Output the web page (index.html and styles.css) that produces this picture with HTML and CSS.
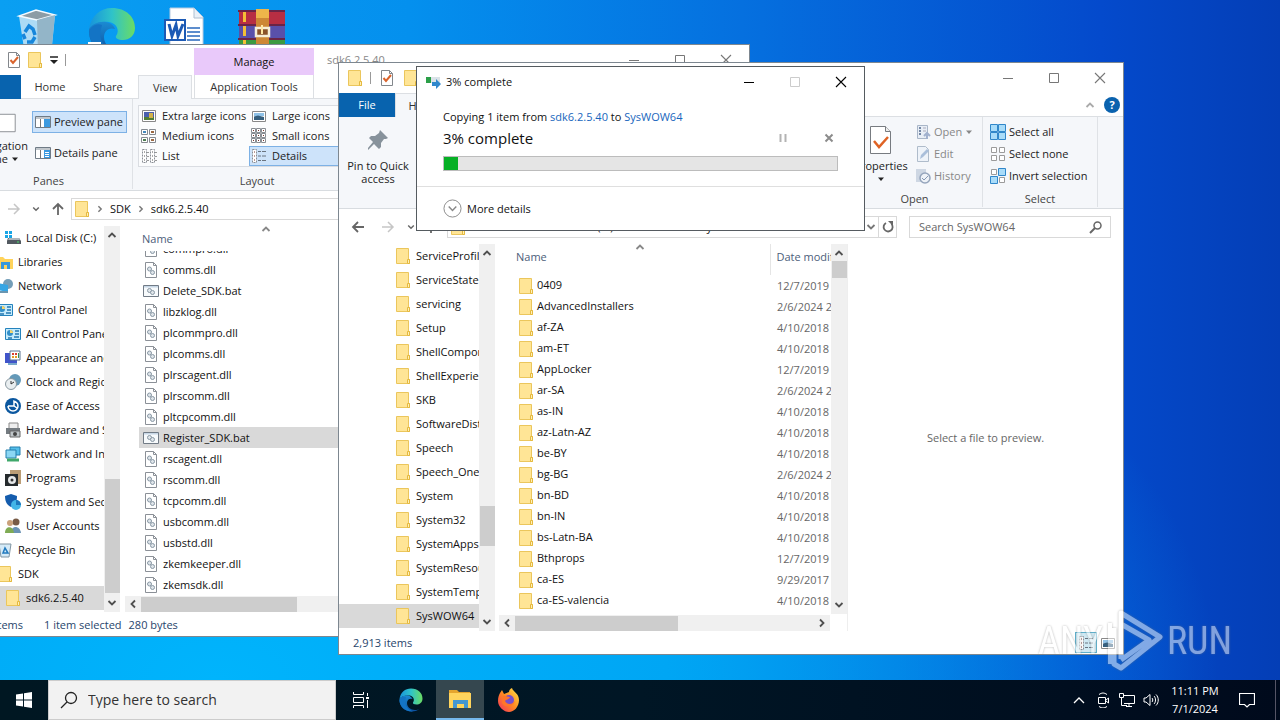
FILE: index.html
```html
<!DOCTYPE html>
<html lang="en">
<head>
<meta charset="utf-8">
<title>Desktop</title>
<link rel="stylesheet" href="styles.css">
</head>
<body>
<svg class="defs" aria-hidden="true">
  <symbol id="folder" viewBox="0 0 16 16"><path d="M1.500.5h12v11h1v4h-13z" fill="#ffe596" stroke="#ebc65c"/><path d="M12.500 11.500h2v4h-2z" fill="#fff0b8" stroke="#e5b93f"/></symbol>
  <symbol id="dll" viewBox="0 0 16 16"><path d="M2.500.5h8l3 3v12h-11z" fill="#fff" stroke="#8b9097"/><path d="M10.500.5v3h3" fill="none" stroke="#8b9097"/><circle cx="6.500" cy="7" r="2" fill="#dfe5ea" stroke="#8998a5"/><circle cx="9.500" cy="10.500" r="2" fill="#dfe5ea" stroke="#8998a5"/></symbol>
  <symbol id="bat" viewBox="0 0 16 16"><path d="M.5 2.500h15v11H.5z" fill="#f7fafc" stroke="#717b86"/><path d="M1 3h14v1.500H1z" fill="#c7d7e6"/><circle cx="6.500" cy="7.500" r="2" fill="#dfe5ea" stroke="#8998a5"/><circle cx="9.500" cy="9.500" r="2" fill="#dfe5ea" stroke="#8998a5"/></symbol>
  <symbol id="check" viewBox="0 0 16 16"><path d="M2.500.5h8l3 3v12h-11z" fill="#fff" stroke="#83878c"/><path d="M10.500.5v3h3" fill="none" stroke="#83878c"/><path d="M4.500 8l2.500 3 5-6" fill="none" stroke="#d9632c" stroke-width="2"/></symbol>
  <symbol id="min" viewBox="0 0 12 12"><path d="M1 6.500h10" stroke="currentColor"/></symbol>
  <symbol id="max" viewBox="0 0 12 12"><path d="M1.500 1.500h9v9h-9z" fill="none" stroke="currentColor"/></symbol>
  <symbol id="close" viewBox="0 0 12 12"><path d="M1 1l10 10M11 1L1 11" stroke="currentColor" stroke-width="1.100"/></symbol>
  <symbol id="up" viewBox="0 0 10 10"><path d="M1.500 7L5 3.500 8.500 7" fill="none" stroke="currentColor" stroke-width="1.800"/></symbol>
  <symbol id="down" viewBox="0 0 10 10"><path d="M1.500 3L5 6.500 8.500 3" fill="none" stroke="currentColor" stroke-width="1.800"/></symbol>
  <symbol id="left" viewBox="0 0 10 10"><path d="M7 1.500L3.500 5 7 8.500" fill="none" stroke="currentColor" stroke-width="1.800"/></symbol>
  <symbol id="right" viewBox="0 0 10 10"><path d="M3 1.500L6.500 5 3 8.500" fill="none" stroke="currentColor" stroke-width="1.800"/></symbol>
  <symbol id="back" viewBox="0 0 14 14"><path d="M13 7H2M7 2L2 7l5 5" fill="none" stroke="currentColor" stroke-width="1.800"/></symbol>
  <symbol id="fwd" viewBox="0 0 14 14"><path d="M1 7h11M7 2l5 5-5 5" fill="none" stroke="currentColor" stroke-width="1.500"/></symbol>
  <symbol id="upa" viewBox="0 0 14 14"><path d="M7 13V2M2 7l5-5 5 5" fill="none" stroke="currentColor" stroke-width="1.800"/></symbol>
  <symbol id="tri" viewBox="0 0 8 8"><path d="M1 2.500h6L4 6z" fill="currentColor"/></symbol>
  <symbol id="panel" viewBox="0 0 16 16"><path d="M.5 2.500h15v11H.5z" fill="#c5ebfc" stroke="#2583bd"/><circle cx="5" cy="7" r="3" fill="#338fc9"/><path d="M5 7V4a3 3 0 0 1 3 3z" fill="#f8d66b"/><path d="M10 5h4M10 8h4M3 12h4M9 11h5" stroke="#2478b0" stroke-width="1.500"/></symbol>
  <symbol id="details" viewBox="0 0 16 16"><path d="M1.500 1.500h4v13h-4z" fill="#fff" stroke="#8a8f96" stroke-dasharray="2 1"/><path d="M3 4h1M3 8h1M3 12h1" stroke="#7c3b32"/><path d="M7 3.500h3m1 0h4M7 8h3m1 0h4M7 12.500h3m1 0h4" stroke="#6a7480"/></symbol>
  <symbol id="list" viewBox="0 0 16 16"><path d="M1.500 1.500h4v13h-4zM9.500 1.500h4v13h-4z" fill="#fff" stroke="#8a8f96" stroke-dasharray="2 1"/><path d="M3 4h1M3 8h1M3 12h1M11 4h1M11 8h1M11 12h1" stroke="#555"/><path d="M6 4.500h2M6 8.500h2M6 12.500h2M14 4.500h2M14 8.500h2M14 12.500h2" stroke="#999"/></symbol>
  <symbol id="photo" viewBox="0 0 16 16"><path d="M1.500 3.500h13v10h-13z" fill="#fff" stroke="#888"/><path d="M3 5h10v3H3z" fill="#8fc2e8"/><path d="M3 8.500l4-1 6 1.500v3H3z" fill="#355f7e"/></symbol>
  <symbol id="xl" viewBox="0 0 16 16"><path d="M1.500 2.500h13v11h-13z" fill="#fff" stroke="#888"/><path d="M3 4h10v8H3z" fill="#4b5fae"/><path d="M3 9h10v3H3z" fill="#4f7d35"/><path d="M8 5h4v5H8z" fill="#d2b24a"/></symbol>
  <symbol id="medium" viewBox="0 0 16 16"><path d="M.5 1.500h6v5h-6zM8.500 1.500h6v5h-6zM.5 9.500h6v5h-6zM8.500 9.500h6v5h-6z" fill="#fff" stroke="#858a90"/><path d="M2 3h3v2H2z" fill="#4589bc"/><path d="M10 3h3v2h-3zM10 11h3v2h-3z" fill="#9c6943"/><path d="M2 11h3v2H2z" fill="#4b7c50"/></symbol>
  <symbol id="small" viewBox="0 0 16 16"><path d="M.5.5h4v4h-4zM5.500.5h4v4h-4zM10.500.5h4v4h-4zM.5 5.500h4v4h-4zM5.500 5.500h4v4h-4zM10.500 5.500h4v4h-4zM.5 10.500h4v4h-4zM5.500 10.500h4v4h-4zM10.500 10.500h4v4h-4z" fill="#fff" stroke="#888d93"/><path d="M2 2.500h1M7 2.500h1M12 2.500h1M2 7.500h1M7 7.500h1M12 7.500h1M2 12.500h1M7 12.500h1M12 12.500h1" stroke="#7c3b32"/></symbol>
  <symbol id="pane" viewBox="0 0 16 16"><path d="M.5 2.500h15v11H.5z" fill="#fff" stroke="#6f7b86"/><path d="M1 3h14v2H1z" fill="#c1c7cc"/><path d="M5.500 5v8" stroke="#777"/><path d="M9 5h6v8H9z" fill="#3c9ae0"/></symbol>
  <symbol id="pane2" viewBox="0 0 16 16"><path d="M.5 2.500h15v11H.5z" fill="#fff" stroke="#6f7b86"/><path d="M1 3h14v2H1z" fill="#c1c7cc"/><path d="M5.500 5v8" stroke="#777"/><path d="M9 5h6v8H9z" fill="#3c9ae0"/><path d="M10 7.500h4M10 9.500h4M10 11.500h4" stroke="#fff"/></symbol>
  <symbol id="edge" viewBox="0 0 48 48"><defs><linearGradient id="eg" x1="0" x2="1"><stop offset="0" stop-color="#1793dc"/><stop offset=".5" stop-color="#2fc3c9"/><stop offset="1" stop-color="#6bdc63"/></linearGradient><linearGradient id="ed" x1="0" y1="0" x2="0" y2="1"><stop offset="0" stop-color="#1b8bd3"/><stop offset="1" stop-color="#0c4f9e"/></linearGradient></defs><path d="M1 22C3 9 12 1 24 1c14 0 23 9 23 20 0 8-6 12-12 12-5 0-8-2-7-4 4-5 1-13-7-14C12 14 4 17 1 22z" fill="url(#eg)"/><path d="M1 22c3-5 10-8 17-7 5 1 8 4 9 7-5-2-11 1-11 8 0 8 7 14 16 14 4 0 7-1 10-3-4 4-10 6-17 6C11 47 0 37 1 22z" fill="url(#ed)"/><path d="M13 22c-3 10 3 20 15 25C15 48 1 39 1 24c3-6 8-8 13-6z" fill="#1374c5"/></symbol>
</svg>

<main class="desktop">
  <div class="shortcuts">
    <svg viewBox="0 0 48 48"><path d="M6 9l17-6 19 5-4 40H12z" fill="#c9e5f6" opacity=".85"/><path d="M6 9l18 4 18-5-19-5z" fill="#8c9ca5" stroke="#f5fbff" stroke-width="1.500"/><path d="M24 13l18-5-4 40H25z" fill="#93b5c8"/><path d="M12 25l4-6 4 3 2 6M22 30l-3 5h-5M12 32l-2-5" fill="none" stroke="#1686db" stroke-width="3.500"/></svg>
    <svg viewBox="0 0 48 48"><use href="#edge"/><path d="M0 35h13v13H0z" fill="#fff"/></svg>
    <svg viewBox="0 0 48 48"><path d="M7 1h24l9 9v38H7z" fill="#fff" stroke="#b8cadf"/><path d="M31 1v10h9" fill="#e9f0f8" stroke="#aebfd0"/><path d="M24 21h13M24 25h13M24 29h13M24 33h13" stroke="#2868bd" stroke-width="1.500"/><path d="M2 13h20v20H2z" fill="#fff" stroke="#1c5ab5" stroke-width="2"/><path d="M6 17l3 12 4-11 2 11 5-12" fill="none" stroke="#1c5ab5" stroke-width="3"/></svg>
    <svg viewBox="0 0 48 48"><path d="M1 3h46v14H1z" fill="#b72e43"/><path d="M1 17h46v14H1z" fill="#5950aa"/><path d="M1 31h46v17H1z" fill="#3c9a41"/><path d="M0 4h47M0 18h47M0 32h47" stroke="#6a2446" stroke-width="2"/><path d="M5 5h3v10H5zM5 19h3v10H5zM5 33h3v12H5z" fill="#f4bf36"/><path d="M18 2h13v46H18z" fill="#cd8735"/><path d="M18 2h13v9H18z" fill="#edb54a"/><path d="M18 21h13v8H18z" fill="#8a5228" stroke="#f6eed8" stroke-width="2.500"/><path d="M24 18v9" stroke="#ffe7a3" stroke-width="2"/></svg>
  </div>

  <section class="window win-sdk" aria-label="sdk6.2.5.40">
    <header class="titlebar">
      <div class="quick"><svg class="i16"><use href="#check"/></svg><svg class="i16"><use href="#folder"/></svg><svg class="i12 dark" viewBox="0 0 12 12"><path d="M2 3h8" stroke="currentColor" stroke-width="1.500"/><path d="M2 6h8l-4 4z" fill="currentColor"/></svg><i class="bar"></i></div>
      <div class="manage">Manage</div>
      <div class="wtitle">sdk6.2.5.40</div>
      <div class="controls"><button aria-label="Minimize"><svg class="i12"><use href="#min"/></svg></button><button aria-label="Maximize"><svg class="i12"><use href="#max"/></svg></button><button aria-label="Close"><svg class="i12"><use href="#close"/></svg></button></div>
    </header>
    <nav class="tabs"><button class="file">File</button><button>Home</button><button>Share</button><button class="current">View</button><button class="tools">Application Tools</button></nav>
    <div class="ribbon">
      <div class="group panes">
        <div class="group-body">
          <button class="big"><svg class="navicon" viewBox="0 0 32 24"><path d="M.5 2.500h31v19H.5z" fill="#fff" stroke="#85898e"/><path d="M1 3h10v18H1z" fill="#67b2e8"/></svg><span>Navigation<br>pane <svg class="i8"><use href="#tri"/></svg></span></button>
          <div class="stack"><button class="cmd on"><svg class="i16"><use href="#pane"/></svg>Preview pane</button><button class="cmd"><svg class="i16"><use href="#pane2"/></svg>Details pane</button></div>
        </div>
        <div class="caption">Panes</div>
      </div>
      <div class="group layout">
        <div class="gallery">
          <button><svg class="i16"><use href="#xl"/></svg>Extra large icons</button><button><svg class="i16"><use href="#photo"/></svg>Large icons</button>
          <button><svg class="i16"><use href="#medium"/></svg>Medium icons</button><button><svg class="i16"><use href="#small"/></svg>Small icons</button>
          <button><svg class="i16"><use href="#list"/></svg>List</button><button class="on"><svg class="i16"><use href="#details"/></svg>Details</button>
        </div>
        <div class="caption">Layout</div>
      </div>
    </div>
    <div class="address">
      <button class="faint" aria-label="Forward"><svg class="i14"><use href="#fwd"/></svg></button><button aria-label="Recent"><svg class="i8"><use href="#down"/></svg></button><button aria-label="Up"><svg class="i14"><use href="#upa"/></svg></button>
      <div class="path"><svg class="i16"><use href="#folder"/></svg><svg class="i8"><use href="#right"/></svg><span>SDK</span><svg class="i8"><use href="#right"/></svg><span>sdk6.2.5.40</span></div>
    </div>
    <div class="body">
      <ul class="tree">
        <li class="sub"><svg class="i16" viewBox="0 0 16 16"><path d="M0 1h3v3H0zM4 1h3v3H4zM0 5h3v3H0zM4 5h3v3H4z" fill="#19a5e5"/><path d="M3 8h11l2 3v3H2v-3z" fill="#525960"/><path d="M4 8h10l1 2H3z" fill="#aeb5ba"/><path d="M12 12h2" stroke="#4be06a"/></svg>Local Disk (C:)</li>
        <li><svg class="i16" viewBox="0 0 16 16"><path d="M0 3h6l2 2h8v10H0z" fill="#ffd35b"/><path d="M4 8h9v7h-3v-4H7v4H4z" fill="#3698dc"/></svg>Libraries</li>
        <li><svg class="i16" viewBox="0 0 16 16"><circle cx="11" cy="6" r="5" fill="#749eb8"/><path d="M1 5l10 2v7L1 12z" fill="#35a5e4"/><path d="M3 14h8" stroke="#6996b1" stroke-width="2"/></svg>Network</li>
        <li><svg class="i16"><use href="#panel"/></svg>Control Panel</li>
        <li class="sub"><svg class="i16"><use href="#panel"/></svg>All Control Panel Items</li>
        <li class="sub"><svg class="i16" viewBox="0 0 16 16"><path d="M0 3h12v10H0z" fill="#4054ca"/><path d="M5 1h10v9H5z" fill="#fff" stroke="#5d7491"/><path d="M7 3h2v2H7zM10 3h2v2h-2z" fill="#d8402d"/><path d="M7 6h2v2H7zM10 6h2v2h-2z" fill="#e79b21"/><path d="M13 3h1v5h-1z" fill="#368d53"/><path d="M3 14h9" stroke="#77a8cb" stroke-width="2"/></svg>Appearance and Personalization</li>
        <li class="sub"><svg class="i16" viewBox="0 0 16 16"><circle cx="10" cy="6" r="6" fill="#6499b8"/><circle cx="6" cy="10" r="5.500" fill="#e9eef0" stroke="#89979f"/><path d="M6 7v3l3-2" fill="none" stroke="#333"/></svg>Clock and Region</li>
        <li class="sub"><svg class="i16" viewBox="0 0 16 16"><circle cx="8" cy="8" r="8" fill="#0b579f"/><path d="M8 3a5 5 0 1 1-5 5M3 8h6V3m0 5l3 2" fill="none" stroke="#fff" stroke-width="1.500"/></svg>Ease of Access</li>
        <li class="sub"><svg class="i16" viewBox="0 0 16 16"><path d="M4 1h9v6H4z" fill="#eee" stroke="#888"/><path d="M1 6h14v6H1z" fill="#747b80"/><path d="M5 9h10v6H5z" fill="#bfc5c8" stroke="#666"/><circle cx="10" cy="12" r="2" fill="#444"/></svg>Hardware and Sound</li>
        <li class="sub"><svg class="i16" viewBox="0 0 16 16"><path d="M5 1h10v8H5z" fill="#55bee9" stroke="#247ead"/><path d="M1 4h10v8H1z" fill="#8bd7f4" stroke="#247ead"/><path d="M2 14h12" stroke="#40a86b" stroke-width="3"/></svg>Network and Internet</li>
        <li class="sub"><svg class="i16" viewBox="0 0 16 16"><path d="M5 0h11v14H5z" fill="#bb9d75"/><path d="M0 4h13v12H0z" fill="#262b2d"/><circle cx="7" cy="10" r="4" fill="#e6e8e9"/><circle cx="7" cy="10" r="1.500" fill="#333"/></svg>Programs</li>
        <li class="sub"><svg class="i16" viewBox="0 0 16 16"><path d="M0 2l6-2 6 2c0 6-2 9-6 11C2 11 0 8 0 2z" fill="#145cad"/><circle cx="11" cy="11" r="5" fill="#43b5e7"/><path d="M11 11V6a5 5 0 0 1 5 5z" fill="#1e78bd"/></svg>System and Security</li>
        <li class="sub"><svg class="i16" viewBox="0 0 16 16"><circle cx="11" cy="4" r="3.500" fill="#785b46"/><path d="M6 15c0-8 9-8 10 0z" fill="#6b93b4"/><circle cx="5" cy="5" r="3" fill="#caa17b"/><path d="M0 15c0-7 8-8 9 0z" fill="#7fab54"/></svg>User Accounts</li>
        <li><svg class="i16" viewBox="0 0 16 16"><path d="M2 2h12l-2 13H4z" fill="#d5eaf7" stroke="#8195a2"/><path d="M6 11l2-5 3 5z" fill="none" stroke="#2179be" stroke-width="1.500"/></svg>Recycle Bin</li>
        <li><svg class="i16"><use href="#folder"/></svg>SDK</li>
        <li class="sub chosen"><svg class="i16"><use href="#folder"/></svg>sdk6.2.5.40</li>
      </ul>
      <div class="vscroll"><svg class="i10"><use href="#up"/></svg><i></i><svg class="i10"><use href="#down"/></svg></div>
      <div class="files">
        <div class="colhead"><span>Name</span><svg class="i10 sort"><use href="#up"/></svg></div>
        <ul class="rows">
          <li><svg class="i16"><use href="#dll"/></svg>commpro.dll</li><li><svg class="i16"><use href="#dll"/></svg>comms.dll</li><li><svg class="i16"><use href="#bat"/></svg>Delete_SDK.bat</li><li><svg class="i16"><use href="#dll"/></svg>libzklog.dll</li><li><svg class="i16"><use href="#dll"/></svg>plcommpro.dll</li><li><svg class="i16"><use href="#dll"/></svg>plcomms.dll</li><li><svg class="i16"><use href="#dll"/></svg>plrscagent.dll</li><li><svg class="i16"><use href="#dll"/></svg>plrscomm.dll</li><li><svg class="i16"><use href="#dll"/></svg>pltcpcomm.dll</li><li class="chosen"><svg class="i16"><use href="#bat"/></svg>Register_SDK.bat</li><li><svg class="i16"><use href="#dll"/></svg>rscagent.dll</li><li><svg class="i16"><use href="#dll"/></svg>rscomm.dll</li><li><svg class="i16"><use href="#dll"/></svg>tcpcomm.dll</li><li><svg class="i16"><use href="#dll"/></svg>usbcomm.dll</li><li><svg class="i16"><use href="#dll"/></svg>usbstd.dll</li><li><svg class="i16"><use href="#dll"/></svg>zkemkeeper.dll</li><li><svg class="i16"><use href="#dll"/></svg>zkemsdk.dll</li>
        </ul>
        <div class="hscroll"><svg class="i10"><use href="#left"/></svg><i></i></div>
      </div>
    </div>
    <footer class="status"><span class="count">22 items</span><span>1 item selected</span><span>280 bytes</span></footer>
  </section>

  <section class="window win-sys" aria-label="SysWOW64">
    <header class="titlebar">
      <div class="quick"><svg class="i16"><use href="#folder"/></svg><i class="bar"></i><svg class="i16"><use href="#check"/></svg><svg class="i16"><use href="#folder"/></svg></div>
      <div class="controls"><button aria-label="Minimize"><svg class="i12"><use href="#min"/></svg></button><button aria-label="Maximize"><svg class="i12"><use href="#max"/></svg></button><button aria-label="Close"><svg class="i12"><use href="#close"/></svg></button></div>
    </header>
    <nav class="tabs"><button class="file">File</button><button class="current">Home</button><div class="help"><svg class="i10"><use href="#up"/></svg><button class="ask" aria-label="Help">?</button></div></nav>
    <div class="ribbon">
      <div class="group pin"><button class="big"><svg class="pinicon" viewBox="0 0 24 24"><path d="M14 2l8 8-2 1-2 0-3 4 0 4-2 2-5-5-6 6 0-2 5-6-4-4 2-2 4 0 4-3z" fill="#87929b"/></svg><span>Pin to Quick<br>access</span></button></div>
      <div class="group open">
        <div class="group-body">
          <button class="big"><svg class="propicon" viewBox="0 0 24 30"><path d="M1.500 1.500h15l5 5v22h-20z" fill="#fff" stroke="#777b80"/><path d="M16.500 1.500v5h5" fill="#eee" stroke="#777b80"/><path d="M5 16l5 6 9-10" fill="none" stroke="#df6325" stroke-width="2.500"/></svg><span>Properties<br><svg class="i8"><use href="#tri"/></svg></span></button>
          <div class="stack off"><button class="cmd"><svg class="i16" viewBox="0 0 16 16"><path d="M2.500 1.500h10v13h-10z" fill="#e8eef6" stroke="#a9b6c8"/><path d="M4 4h2M4 7h2M4 10h2" stroke="#7387a5" stroke-width="2"/><path d="M8 4h3M8 7h3" stroke="#aab"/><path d="M12 15V9M9 12l3-3 3 3" fill="none" stroke="#a1b1ce" stroke-width="2"/></svg>Open <svg class="i8"><use href="#tri"/></svg></button><button class="cmd"><svg class="i16" viewBox="0 0 16 16"><path d="M2.500.5h8l3 3v12h-11z" fill="#eef3f9" stroke="#afbccb"/><path d="M5 13l1-4 6-6 2 2-6 6z" fill="#aabfda"/></svg>Edit</button><button class="cmd"><svg class="i16" viewBox="0 0 16 16"><path d="M1 1h10v13H1z" fill="#ced7e3"/><circle cx="10" cy="10" r="5" fill="#eef2f7" stroke="#95a5bc" stroke-width="1.500"/><path d="M7 10l2 2 4-4" fill="none" stroke="#8799b4"/></svg>History</button></div>
        </div>
        <div class="caption">Open</div>
      </div>
      <div class="group select">
        <div class="stack"><button class="cmd"><svg class="i16" viewBox="0 0 16 16"><path d="M.5.5h7v7h-7zM8.500.5h7v7h-7zM.5 8.500h7v7h-7zM8.500 8.500h7v7h-7z" fill="#a9dcf9" stroke="#3087ca"/></svg>Select all</button><button class="cmd"><svg class="i16" viewBox="0 0 16 16"><path d="M1.500 1.500h5v5h-5zM9.500 1.500h5v5h-5zM1.500 9.500h5v5h-5zM9.500 9.500h5v5h-5z" fill="#fff" stroke="#9b9b9b"/></svg>Select none</button><button class="cmd"><svg class="i16" viewBox="0 0 16 16"><path d="M1.500 1.500h5v5h-5zM9.500 9.500h5v5h-5z" fill="#fff" stroke="#9b9b9b"/><path d="M8.500.5h7v7h-7zM.5 8.500h7v7h-7z" fill="#a9dcf9" stroke="#3087ca"/></svg>Invert selection</button></div>
        <div class="caption">Select</div>
      </div>
    </div>
    <div class="address">
      <button aria-label="Back"><svg class="i14"><use href="#back"/></svg></button><button class="faint" aria-label="Forward"><svg class="i14"><use href="#fwd"/></svg></button><button aria-label="Recent"><svg class="i8"><use href="#down"/></svg></button><button aria-label="Up"><svg class="i14"><use href="#upa"/></svg></button>
      <div class="path"><svg class="i16"><use href="#folder"/></svg><svg class="i8"><use href="#right"/></svg><span>This PC</span><svg class="i8"><use href="#right"/></svg><span>Local Disk (C:)</span><svg class="i8"><use href="#right"/></svg><span>Windows</span><svg class="i8"><use href="#right"/></svg><span>SysWOW64</span><svg class="i10 drop"><use href="#down"/></svg></div>
      <button class="refresh" aria-label="Refresh"><svg class="i14" viewBox="0 0 14 14"><path d="M10.500 4A4.500 4.500 0 1 1 5 3" fill="none" stroke="currentColor" stroke-width="1.800"/><path d="M7 1h5v5z" fill="currentColor"/></svg></button>
      <label class="find"><input type="text" placeholder="Search SysWOW64" aria-label="Search SysWOW64"><svg class="i14" viewBox="0 0 14 14"><circle cx="8.500" cy="5.500" r="3.500" fill="none" stroke="currentColor" stroke-width="1.500"/><path d="M6 8l-5 5" stroke="currentColor" stroke-width="2"/></svg></label>
    </div>
    <div class="body">
      <ul class="tree">
        <li><svg class="i16"><use href="#folder"/></svg>ServiceProfiles</li><li><svg class="i16"><use href="#folder"/></svg>ServiceState</li><li><svg class="i16"><use href="#folder"/></svg>servicing</li><li><svg class="i16"><use href="#folder"/></svg>Setup</li><li><svg class="i16"><use href="#folder"/></svg>ShellComponents</li><li><svg class="i16"><use href="#folder"/></svg>ShellExperiences</li><li><svg class="i16"><use href="#folder"/></svg>SKB</li><li><svg class="i16"><use href="#folder"/></svg>SoftwareDistribution</li><li><svg class="i16"><use href="#folder"/></svg>Speech</li><li><svg class="i16"><use href="#folder"/></svg>Speech_OneCore</li><li><svg class="i16"><use href="#folder"/></svg>System</li><li><svg class="i16"><use href="#folder"/></svg>System32</li><li><svg class="i16"><use href="#folder"/></svg>SystemApps</li><li><svg class="i16"><use href="#folder"/></svg>SystemResources</li><li><svg class="i16"><use href="#folder"/></svg>SystemTemp</li><li class="chosen"><svg class="i16"><use href="#folder"/></svg>SysWOW64</li>
      </ul>
      <div class="vscroll"><svg class="i10"><use href="#up"/></svg><i></i><svg class="i10"><use href="#down"/></svg></div>
      <div class="files">
        <div class="table-area">
          <div class="table-clip">
            <svg class="i10 sort"><use href="#up"/></svg>
            <table>
              <thead><tr><th>Name</th><th class="date">Date modified</th></tr></thead>
              <tbody>
                <tr><td><svg class="i16"><use href="#folder"/></svg>0409</td><td>12/7/2019 9:31 AM</td></tr>
                <tr><td><svg class="i16"><use href="#folder"/></svg>AdvancedInstallers</td><td>2/6/2024 2:12 PM</td></tr>
                <tr><td><svg class="i16"><use href="#folder"/></svg>af-ZA</td><td>4/10/2018 9:31 AM</td></tr>
                <tr><td><svg class="i16"><use href="#folder"/></svg>am-ET</td><td>4/10/2018 9:31 AM</td></tr>
                <tr><td><svg class="i16"><use href="#folder"/></svg>AppLocker</td><td>12/7/2019 9:31 AM</td></tr>
                <tr><td><svg class="i16"><use href="#folder"/></svg>ar-SA</td><td>2/6/2024 2:12 PM</td></tr>
                <tr><td><svg class="i16"><use href="#folder"/></svg>as-IN</td><td>4/10/2018 9:31 AM</td></tr>
                <tr><td><svg class="i16"><use href="#folder"/></svg>az-Latn-AZ</td><td>4/10/2018 9:31 AM</td></tr>
                <tr><td><svg class="i16"><use href="#folder"/></svg>be-BY</td><td>4/10/2018 9:31 AM</td></tr>
                <tr><td><svg class="i16"><use href="#folder"/></svg>bg-BG</td><td>2/6/2024 2:12 PM</td></tr>
                <tr><td><svg class="i16"><use href="#folder"/></svg>bn-BD</td><td>4/10/2018 9:31 AM</td></tr>
                <tr><td><svg class="i16"><use href="#folder"/></svg>bn-IN</td><td>4/10/2018 9:31 AM</td></tr>
                <tr><td><svg class="i16"><use href="#folder"/></svg>bs-Latn-BA</td><td>4/10/2018 9:31 AM</td></tr>
                <tr><td><svg class="i16"><use href="#folder"/></svg>Bthprops</td><td>12/7/2019 9:31 AM</td></tr>
                <tr><td><svg class="i16"><use href="#folder"/></svg>ca-ES</td><td>9/29/2017 9:31 AM</td></tr>
                <tr><td><svg class="i16"><use href="#folder"/></svg>ca-ES-valencia</td><td>4/10/2018 9:31 AM</td></tr>
                <tr><td><svg class="i16"><use href="#folder"/></svg></td><td></td></tr>
              </tbody>
            </table>
          </div>
          <div class="vscroll"><svg class="i10"><use href="#up"/></svg><i></i><svg class="i10"><use href="#down"/></svg></div>
        </div>
        <div class="hscroll"><svg class="i10"><use href="#left"/></svg><i></i><svg class="i10"><use href="#right"/></svg></div>
      </div>
      <div class="preview">Select a file to preview.</div>
    </div>
    <footer class="status"><span>2,913 items</span><div class="views"><button class="on" aria-label="Details"><svg class="i16"><use href="#details"/></svg></button><button aria-label="Large icons"><svg class="i16"><use href="#photo"/></svg></button></div></footer>
  </section>

  <section class="window dialog" role="dialog" aria-label="3% complete">
    <header class="titlebar"><svg class="i16" viewBox="0 0 16 16"><path d="M1 3h14v6H1z" fill="#dbe3e8"/><path d="M1 3h5v6H1z" fill="#2b9f48"/><path d="M7 8h4V5l5 5-5 5v-3H7z" fill="#3088cc"/></svg><h1>3% complete</h1><div class="controls"><button aria-label="Minimize"><svg class="i12"><use href="#min"/></svg></button><button disabled aria-label="Maximize"><svg class="i12"><use href="#max"/></svg></button><button aria-label="Close"><svg class="i12"><use href="#close"/></svg></button></div></header>
    <div class="copy">
      <p>Copying 1 item from <a href="#">sdk6.2.5.40</a> to <a href="#">SysWOW64</a></p>
      <div class="line"><h2>3% complete</h2><button aria-label="Pause"><svg class="i12" viewBox="0 0 12 12"><path d="M3.500 2v8M8.500 2v8" stroke="#b3b3b3" stroke-width="2"/></svg></button><button aria-label="Cancel"><svg class="i12" viewBox="0 0 12 12"><path d="M2.500 2.500l7 7M9.500 2.500l-7 7" stroke="#8c8c8c" stroke-width="2"/></svg></button></div>
      <progress max="100" value="3.6" aria-label="Copy progress"></progress>
    </div>
    <button class="more"><svg viewBox="0 0 20 20"><circle cx="10" cy="10" r="9" fill="none" stroke="#888"/><path d="M6 8l4 4 4-4" fill="none" stroke="#888" stroke-width="1.500"/></svg>More details</button>
  </section>

  <div class="watermark"><span>ANY</span><svg viewBox="0 0 56 62"><path d="M14 49V3l39 24-39 31-7-4V18m7 32l28-20L14 14" fill="none" stroke="#fff" stroke-width="5" stroke-linejoin="round"/><path d="M3 13v41" stroke="#fff" stroke-width="4"/></svg><span>RUN</span></div>
</main>

<footer class="taskbar">
  <button class="start" aria-label="Start"><svg class="i16" viewBox="0 0 16 16"><path d="M0 2.500L7 1.500v6H0zM8 1.300L16 0v7.500H8zM0 8.500h7v6l-7-1zM8 8.500h8V16l-8-1.300z" fill="#fff"/></svg></button>
  <label class="search"><svg viewBox="0 0 18 18"><circle cx="11" cy="7" r="5.500" fill="none" stroke="#222" stroke-width="1.300"/><path d="M7 11l-6 6" stroke="#222" stroke-width="1.300"/></svg><input type="text" placeholder="Type here to search" aria-label="Type here to search"></label>
  <button aria-label="Task view"><svg class="i16" viewBox="0 0 16 16"><path d="M.5 0v2.500h10V0M.5 16v-2.500h10V16M.5 5.500h10v5H.5zM14.500 1v3M14.500 8v8" fill="none" stroke="#fff"/><path d="M13 5h3v2h-3z" fill="#fff"/></svg></button>
  <button aria-label="Edge"><svg class="i24"><use href="#edge"/></svg></button>
  <button class="active" aria-label="File Explorer"><svg class="i24" viewBox="0 0 24 24"><path d="M1 3h8l2 2h11v4H1z" fill="#e5a52e"/><path d="M1 6h22v15H1z" fill="#ffd45d"/><path d="M5 21v-8h15v8h-4v-4H9v4z" fill="#4497d2"/></svg></button>
  <button aria-label="Firefox"><svg class="i24" viewBox="0 0 24 24"><defs><linearGradient id="ff" x1="1" y1="0" x2="0" y2="1"><stop offset="0" stop-color="#ffe84b"/><stop offset=".5" stop-color="#ff8a22"/><stop offset="1" stop-color="#f22d60"/></linearGradient></defs><path d="M3 5l2-3 2 4 5-2c0-2 1-3 3-4 1 4 7 5 7 12 0 7-5 12-10 12S1 19 1 13c0-4 1-6 2-8z" fill="url(#ff)"/><circle cx="12" cy="12" r="5" fill="#7650cd"/><path d="M6 8c3-1 4 1 7 1-1 3-4 2-5 4 2 4 7 4 10 0-1 5-10 8-13 2z" fill="#ff7629"/></svg></button>
  <div class="tray">
    <svg class="i16" viewBox="0 0 16 16"><path d="M3 11l5-5 5 5" fill="none" stroke="#fff" stroke-width="1.300"/></svg>
    <svg class="i16" viewBox="0 0 16 16"><path d="M3.500 5.500h7v6h-7zM11 8l2.500-2v5L11 9M4 2.500c3-2 5-2 8 0M4 14.500c3 2 5 2 8 0" fill="none" stroke="#fff"/></svg>
    <svg class="i16" viewBox="0 0 16 16"><path d="M4 3.500h11.500v8H5M.5 1.500h4v4h-4zM2.500 6v7.500H8M10 12v2M7 14.500h6" fill="none" stroke="#fff"/></svg>
    <svg class="i16" viewBox="0 0 16 16"><path d="M1 6h2l4-3.500v11L3 10H1zM9 6c1 1 1 3 0 4M11 4c2 2 2 6 0 8M13 2.500c3 3 3 8 0 11" fill="none" stroke="#fff"/></svg>
  </div>
  <div class="clock">11:11 PM<br>7/1/2024</div>
  <button class="notice" aria-label="Notifications"><svg class="i16" viewBox="0 0 16 16"><path d="M.5 1.500h15v11h-5L8 15l-2.500-2.500h-5z" fill="none" stroke="#fff" stroke-width="1.200"/></svg></button>
  <i class="peek"></i>
</footer>
</body>
</html>
```

FILE: styles.css
```css
* { box-sizing: border-box; }
body { margin: 0; height: 100vh; display: flex; flex-direction: column; overflow: hidden; font: 11px/16px "Open Sans", "Noto Sans", sans-serif; color: #111; }
.defs { position: absolute; width: 0; height: 0; }
ul, p, h1, h2 { margin: 0; padding: 0; font: inherit; list-style: none; }
button { font: inherit; color: inherit; background: none; border: 0; padding: 0; display: flex; align-items: center; justify-content: center; white-space: nowrap; }
input { font: inherit; border: 0; background: none; padding: 0; outline: 0; min-width: 0; flex: 1; }
input::placeholder { color: #666; opacity: 1; }
svg { flex: none; display: block; }
.i8 { width: 8px; height: 8px; }
.i10 { width: 10px; height: 10px; }
.i12 { width: 12px; height: 12px; }
.i14 { width: 14px; height: 14px; }
.i16 { width: 16px; height: 16px; }
.i24 { width: 24px; height: 24px; }

.desktop { position: relative; flex: 1; overflow: hidden; background: radial-gradient(ellipse 1000px 560px at 17% 100%, #00b4fc 0%, #00a6f4 45%, transparent 100%), linear-gradient(90deg, #0a9ff2 0%, #0490ee 32%, #0570df 58%, #044acc 86%, #043eb6 100%); }
.shortcuts { display: flex; gap: 27px; padding: 7px 13px; }
.shortcuts svg { width: 48px; height: 48px; }

.window { position: absolute; isolation: isolate; display: flex; flex-direction: column; background: #fff; border: 1px solid #7d8790; overflow: hidden; }
.win-sdk { left: -40px; top: 44px; width: 790px; height: 593px; }
.win-sys { left: 338px; top: 62px; width: 786px; height: 593px; }
.titlebar { display: flex; height: 30px; align-items: center; flex: none; }
.quick { display: flex; align-items: center; gap: 6px; }
.win-sdk .quick { width: 233px; padding-left: 45px; gap: 5px; }
.bar { width: 1px; height: 12px; background: #999; }
.dark { color: #222; }
.manage { align-self: flex-end; width: 120px; height: 27px; line-height: 28px; text-align: center; background: #e9c9fa; }
.wtitle { margin-left: 13px; color: #888; }
.controls { display: flex; margin-left: auto; color: #777; }
.controls button { width: 46px; height: 28px; }
.tabs { display: flex; height: 24px; flex: none; border-bottom: 1px solid #dcdfe3; }
.tabs button { height: 24px; color: #333; }
.tabs .file { width: 60px; background: #0863ae; color: #fff; }
.tabs .current { background: #f5f7fa; border: 1px solid #dcdfe3; border-bottom: 0; }
.win-sdk .tabs button:nth-child(2), .win-sdk .tabs button:nth-child(3) { width: 58px; }
.win-sdk .tabs .current { width: 54px; margin-left: 1px; }
.win-sdk .tabs .tools { width: 120px; margin-left: 2px; border: 1px solid #dcdfe3; border-width: 0 1px; }
.ribbon { display: flex; height: 92px; flex: none; background: #f5f7fa; border-bottom: 1px solid #d8dce0; color: #222; }
.group { display: flex; flex-direction: column; border-right: 1px solid #dfe2e6; margin-bottom: 1px; }
.caption { margin-top: auto; text-align: center; height: 16px; color: #444; }
.group-body { display: flex; }
.big { flex-direction: column; justify-content: flex-start; line-height: 13px; }
.big span { text-align: center; }
.big span svg { display: inline-block; }
.cmd { height: 22px; gap: 3px; justify-content: flex-start; }
.panes { width: 172px; padding: 12px 0 0 4px; }
.panes .big { width: 71px; padding-top: 1px; gap: 5px; margin-right: -4px; }
.navicon { width: 32px; height: 22px; }
.panes .stack { display: grid; gap: 7px; }
.panes .cmd { width: 95px; padding: 0 2px; border: 1px solid transparent; }
.panes .cmd.on { background: #cde3fa; border-color: #7db1e5; }
.layout { width: 248px; padding: 6px 4px 0 5px; }
.gallery { display: grid; grid-template-columns: 110px 1fr; border: 1px solid #dadde2; background: #fbfcfd; }
.gallery button { height: 20px; justify-content: flex-start; gap: 5px; padding-left: 2px; }
.gallery .on { background: #cde3fa; border: 1px solid #7db1e5; padding-left: 1px; }
.address { display: flex; height: 35px; flex: none; align-items: center; color: #666; }
.address button { width: 20px; height: 22px; }
.address .faint { color: #c6c6c6; }
.win-sdk .address { padding-left: 43px; gap: 2px; }
.path { display: flex; align-items: center; gap: 6px; height: 22px; flex: 1; border: 1px solid #d9d9d9; padding: 0 2px; color: #777; }
.path span { color: #111; }
.win-sdk .path { margin-left: 1px; margin-right: 250px; }
.body { display: flex; flex: 1; min-height: 0; }
.tree { overflow: hidden; flex: none; }
.tree li { display: flex; align-items: center; height: 24px; gap: 5px; white-space: nowrap; padding-left: 36px; }
.tree li.sub { padding-left: 44px; }
.chosen { background: #d9d9d9; }
.win-sdk .tree { width: 143px; }
.vscroll { display: flex; flex-direction: column; align-items: center; justify-content: space-between; width: 16px; flex: none; background: #f0f0f0; padding: 4px 0; color: #505050; }
.vscroll i { width: 15px; background: #cdcdcd; }
.win-sdk .body { margin-bottom: 1px; }
.win-sdk .vscroll i { height: 114px; margin-top: auto; margin-bottom: 5px; }
.files { display: flex; flex-direction: column; flex: 1; min-width: 0; }
.win-sdk .files { padding-left: 5px; }
.colhead { position: relative; height: 25px; padding: 5px 17px; color: #4c607a; z-index: 1; background: #fff; }
.sort { color: #888; position: absolute; }
.colhead .sort { left: 136px; top: -2px; }
.rows { flex: 1; overflow: hidden; padding-left: 14px; margin-top: -13px; }
.rows li { display: flex; align-items: center; height: 21px; gap: 4px; padding-left: 4px; }
.hscroll { display: flex; align-items: center; height: 16px; flex: none; background: #f0f0f0; padding-left: 3px; color: #505050; }
.hscroll i { height: 15px; background: #cdcdcd; }
.win-sdk .hscroll i { width: 156px; margin-left: 3px; }
.status { display: flex; align-items: center; height: 23px; flex: none; color: #28456b; }
.count { width: 62px; text-align: right; margin-right: 21px; }
.count + span { margin-right: 7px; }

.win-sys .quick { padding-left: 8px; gap: 8px; }
.win-sys .quick .bar { margin-left: -1px; }
.win-sys .tabs .file { width: 56px; }
.win-sys .tabs .current { width: 58px; }
.help { display: flex; margin-left: auto; align-items: center; gap: 9px; padding-right: 3px; color: #aaa; }
.win-sys .ask { width: 16px; height: 16px; background: #0a62ae; color: #fff; border-radius: 50%; font-weight: 700; }
.pin { width: 78px; padding-top: 11px; margin-right: auto; border: 0; }
.pinicon { width: 24px; height: 24px; margin-bottom: 7px; }
.open { width: 136px; padding-top: 4px; }
.open .big { width: 68px; padding-top: 4px; }
.propicon { width: 24px; height: 30px; margin-bottom: 4px; }
.off { color: #888; }
.select { width: 115px; padding: 4px 0 0 7px; margin-right: 25px; }
.select .caption { padding-right: 7px; }
.win-sys .address { padding: 0 12px 0 9px; }
.win-sys .address > button:nth-child(2) { margin-left: 10px; }
.win-sys .address > button:nth-child(3) { margin-left: 3px; }
.win-sys .path { margin-left: 6px; }
.drop { margin-left: auto; }
.win-sys .refresh { border: 1px solid #d9d9d9; border-left: 0; width: 18px; }
.find { display: flex; align-items: center; width: 202px; height: 22px; border: 1px solid #d9d9d9; margin-left: 12px; padding: 0 7px 0 9px; }
.win-sys .tree { width: 140px; }
.win-sys .tree li { padding-left: 56px; }
.win-sys .tree + .vscroll i { height: 40px; margin-top: auto; margin-bottom: 71px; }
.win-sys .files { flex: none; width: 353px; padding-left: 4px; border-right: 1px solid #eee; }
.table-area { display: flex; flex: 1; min-height: 0; margin-bottom: 1px; }
.table-clip { flex: 1; overflow: hidden; position: relative; }
.table-clip .sort { left: 136px; top: -2px; }
table { border-collapse: collapse; table-layout: fixed; width: 400px; }
th { width: 271px; height: 31px; padding: 0 0 5px 17px; text-align: left; font-weight: 400; color: #4c607a; }
th.date { width: 129px; padding-left: 6px; border-left: 1px solid #e5e5e5; }
td { height: 21px; padding: 0 0 0 19px; white-space: nowrap; }
td + td { padding-left: 7px; color: #666; }
td svg { display: inline-block; vertical-align: middle; margin-right: 3px; }
.table-area .vscroll { justify-content: flex-start; }
.table-area .vscroll i { height: 17px; margin-top: 3px; }
.table-area .vscroll svg:last-child { margin-top: auto; }
.win-sys .hscroll { margin-right: 17px; padding-right: 3px; }
.win-sys .hscroll i { width: 163px; margin: 0 auto 0 3px; }
.preview { flex: 1; display: grid; place-items: center; color: #666; }
.win-sys .status { padding-left: 14px; }
.views { display: flex; margin-left: auto; padding-right: 4px; }
.views button { width: 22px; height: 21px; }
.views .on { background: #cfe9f3; border: 1px solid #5eafcb; }

.dialog { left: 416px; top: 66px; width: 449px; height: 165px; border-color: #555b60; }
.dialog .titlebar { padding-left: 8px; gap: 5px; }
.dialog .controls { color: #000; }
.dialog .controls button:disabled { color: #ccc; }
.copy { padding: 12px 26px 15px; border-bottom: 1px solid #dfdfdf; }
a { color: #1766bd; text-decoration: none; }
.line { display: flex; align-items: center; height: 26px; }
.line h2 { flex: 1; font-size: 15px; }
.line button { width: 46px; }
.line button:last-child { margin-right: -14px; }
progress { appearance: none; display: block; width: 100%; height: 15px; margin-top: 5px; border: 1px solid #bcbcbc; }
progress::-webkit-progress-bar { background: #e5e5e5; }
progress::-webkit-progress-value { background: #06b025; }
.more { flex: 1; justify-content: flex-start; padding: 0 26px; gap: 5px; }
.more svg { width: 19px; height: 19px; }

.watermark { position: absolute; right: 48px; bottom: 8px; display: flex; align-items: center; gap: 4px; opacity: .5; color: #fff; font: 38px/62px "Liberation Sans Narrow", "Roboto Condensed", Roboto, sans-serif; filter: drop-shadow(0 0 1px #777); pointer-events: none; }
.watermark svg { width: 56px; height: 62px; }

.taskbar { display: flex; height: 40px; flex: none; align-items: stretch; color: #fff; background: linear-gradient(90deg, #001722, #001625 50%, #000a1c); }
.taskbar > button { width: 50px; }
.taskbar > .start { width: 48px; }
.search { display: flex; align-items: center; width: 288px; gap: 10px; padding: 0 11px; background: #f2f2f2; border: 1px solid #ccc; font-size: 14px; }
.search svg { width: 18px; height: 18px; }
.search input::placeholder { color: #333; }
.taskbar > .active { width: 48px; background: #35474f; border-bottom: 2px solid #76b9ed; }
.tray { display: flex; align-items: center; gap: 8px; margin-left: auto; }
.clock { width: 72px; padding-top: 2px; text-align: center; line-height: 18px; }
.taskbar > .notice { width: 32px; }
.peek { width: 1px; background: #556; margin: 0 4px 0 12px; }
```
